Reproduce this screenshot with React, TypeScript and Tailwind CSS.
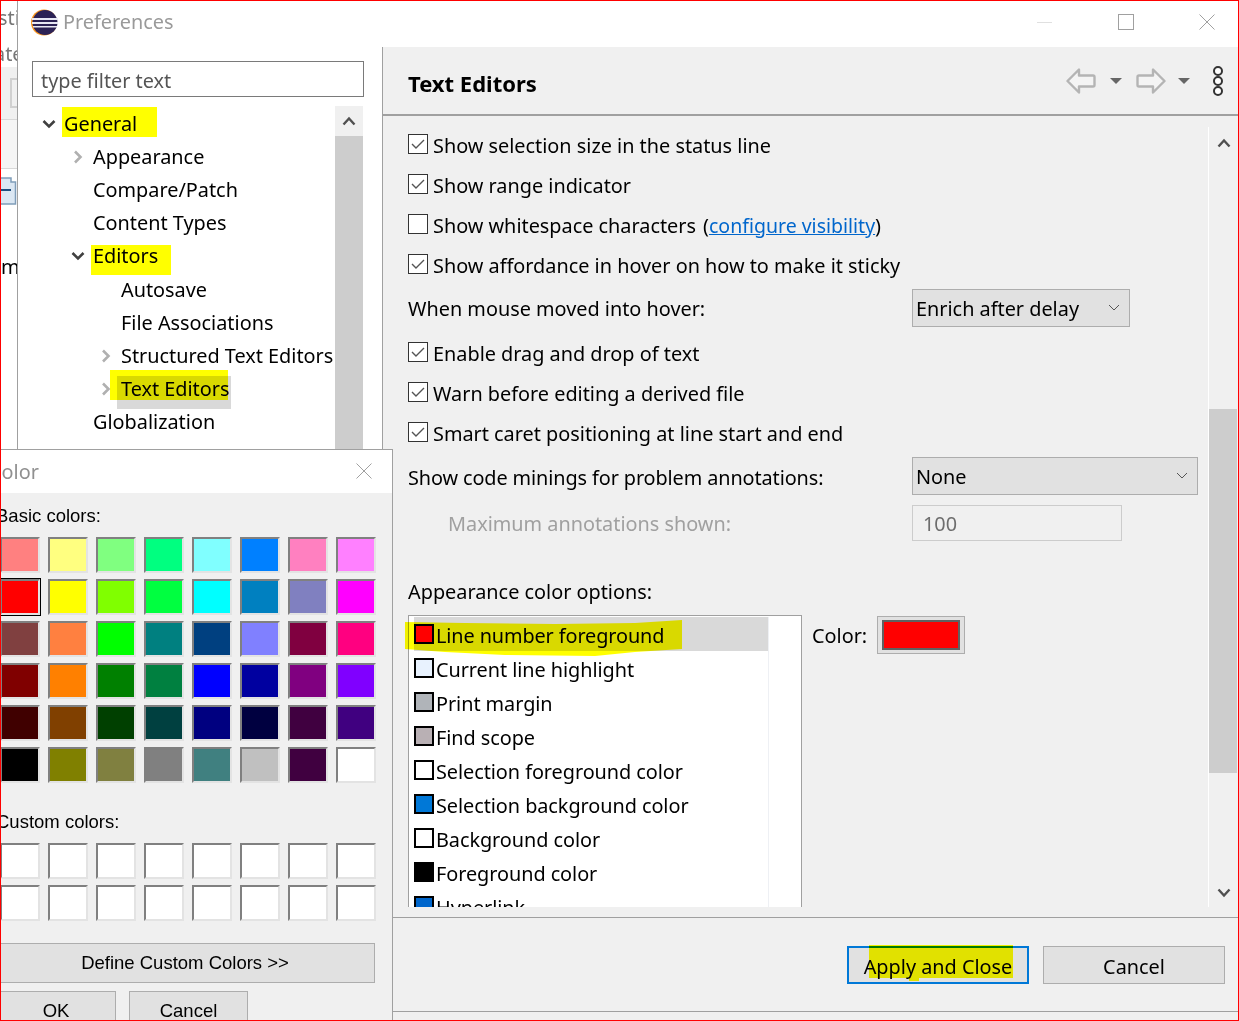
import type { ReactNode } from 'react';

const basicColors = [
  ['#ff8080', '#ffff80', '#80ff80', '#00ff80', '#80ffff', '#0080ff', '#ff80c0', '#ff80ff'],
  ['#ff0000', '#ffff00', '#80ff00', '#00ff40', '#00ffff', '#0080c0', '#8080c0', '#ff00ff'],
  ['#804040', '#ff8040', '#00ff00', '#008080', '#004080', '#8080ff', '#800040', '#ff0080'],
  ['#800000', '#ff8000', '#008000', '#008040', '#0000ff', '#0000a0', '#800080', '#8000ff'],
  ['#400000', '#804000', '#004000', '#004040', '#000080', '#000040', '#400040', '#400080'],
  ['#000000', '#808000', '#808040', '#808080', '#408080', '#c0c0c0', '#400040', '#ffffff'],
];

const colorOptions = [
  ['Line number foreground', '#ff0000'],
  ['Current line highlight', '#e8f2fe'],
  ['Print margin', '#b0b4b9'],
  ['Find scope', '#b9b0b4'],
  ['Selection foreground color', '#ffffff'],
  ['Selection background color', '#0078d7'],
  ['Background color', '#ffffff'],
  ['Foreground color', '#000000'],
  ['Hyperlink', '#0066cc'],
];

function Chevron({ open, dark }: { open?: boolean; dark?: boolean }) {
  return (
    <svg width="14" height="14" viewBox="0 0 14 14" fill="none" stroke={dark ? '#404040' : '#b0b0b0'} strokeWidth="2.6">
      {open ? <path d="M1.5 4 7 9.5 12.5 4" /> : <path d="M4 1.5 9.5 7 4 12.5" />}
    </svg>
  );
}

function TreeRow({ label, indent, arrow, children }: { label: string; indent: string; arrow?: 'open' | 'closed'; children?: ReactNode }) {
  return (
    <div className={`relative flex h-[33.2px] items-center text-[19.85px] text-black ${indent}`}>
      <span className="flex w-[22px] shrink-0 justify-start">
        {arrow === 'open' && <Chevron open dark />}
        {arrow === 'closed' && <Chevron />}
      </span>
      <span className="relative z-10 whitespace-nowrap">{label}</span>
      {children}
    </div>
  );
}

function Check({ label, checked, children }: { label?: string; checked?: boolean; children?: ReactNode }) {
  return (
    <div className="flex h-[40px] items-center gap-[5px] text-[19.85px] whitespace-nowrap text-black">
      <span className="mt-[-2px] flex h-[20px] w-[20px] shrink-0 items-center justify-center border border-[#333333] bg-white">
        {checked && (
          <svg width="16" height="16" viewBox="0 0 16 16" fill="none" stroke="#555555" strokeWidth="1.4">
            <path d="M2 8 6 12 14 4" />
          </svg>
        )}
      </span>
      <span className="pt-px">
        {label}
        {children}
      </span>
    </div>
  );
}

function Select({ label, width }: { label: string; width: string }) {
  return (
    <div className={`flex h-[38px] items-center justify-between border border-[#adadad] bg-[#e1e1e1] pr-[9px] pl-[3px] text-[19.85px] text-black ${width}`}>
      <span className="pt-[2px]">{label}</span>
      <svg width="12" height="8" viewBox="0 0 12 8" fill="none" stroke="#555555" strokeWidth="1">
        <path d="M1 1 6 6 11 1" />
      </svg>
    </div>
  );
}

function ArrowIcon({ flip }: { flip?: boolean }) {
  return (
    <svg width="30" height="26" viewBox="0 0 30 26" fill="#f4f4f4" stroke="#b4b4b4" strokeWidth="2.4" className={flip ? '-scale-x-100' : ''}>
      <path d="M1.5 13 13 1.5V7.5H27a1.5 1.5 0 0 1 1.5 1.5v8a1.5 1.5 0 0 1-1.5 1.5H13v6z" strokeLinejoin="round" />
    </svg>
  );
}

function Caret() {
  return <span className="h-0 w-0 border-x-[6px] border-t-[6px] border-x-transparent border-t-[#666666]" />;
}

function Swatch({ color, selected }: { color: string; selected?: boolean }) {
  return (
    <div className={`h-[36px] w-[40px] border-2 border-t-[#808080] border-r-[#e3e3e3] border-b-[#e3e3e3] border-l-[#808080] ${selected ? 'outline outline-1 outline-black' : ''}`} style={{ backgroundColor: color }} />
  );
}

function SwatchGrid({ rows, focusRow }: { rows: string[][]; focusRow?: number }) {
  return (
    <div className="flex flex-col gap-[6px]">
      {rows.map((row, r) => (
        <div key={r} className="flex gap-[8px]">
          {row.map((c, i) => (
            <Swatch key={i} color={c} selected={r === focusRow && i === 0} />
          ))}
        </div>
      ))}
    </div>
  );
}

function Mark({ className }: { className: string }) {
  return <span className={`absolute z-20 bg-[#ffff00] mix-blend-multiply ${className}`} />;
}

export default function App() {
  const customRows = [Array(8).fill('#ffffff'), Array(8).fill('#ffffff')];
  const [first, ...restOptions] = colorOptions;

  return (
    <div className="relative flex h-[1021px] w-[1239px] overflow-hidden border border-[#ff0000] bg-white font-['Noto_Sans','Open_Sans',sans-serif]">
      {/* window behind the dialog */}
      <div className="flex w-[16px] shrink-0 flex-col overflow-hidden bg-white text-[19.85px] text-[#777777]">
        <div className="h-[38px] pt-[2px] pl-0 whitespace-nowrap">
          <span className="ml-[-3px]">sti</span>
        </div>
        <div className="h-[28px] whitespace-nowrap">
          <span className="ml-[-7px]">ate</span>
        </div>
        <div className="flex h-[53px] shrink-0 items-center justify-end border-b border-[#d8d8d8] bg-[#f0f0f0]">
          <span className="h-[30px] w-[7px] border-y-2 border-l-2 border-[#d0d0d0]" />
        </div>
        <div className="h-[49px] shrink-0 border-b border-[#d8d8d8] bg-[#f5f5f5]" />
        <svg width="16" height="28" viewBox="0 0 16 28" fill="#dbe7f3" stroke="#7f9db9" strokeWidth="1.5" className="mt-[8px] shrink-0">
          <path d="M-2 1H10V5H14.5V27H-2z" />
          <path d="M-2 13H10" stroke="#1f4f7f" strokeWidth="2" />
        </svg>
        <div className="mt-[47px] text-black">m</div>
      </div>

      {/* Preferences window */}
      <div className="flex min-w-0 flex-1 flex-col border-l border-[#a0a0a0]">
        <div className="flex h-[46px] shrink-0 items-center pb-[4px] pl-[13px]">
          <svg width="27" height="27" viewBox="0 0 27 27" className="shrink-0">
            <circle cx="13" cy="13.5" r="13" fill="#f7941e" />
            <circle cx="14" cy="13.5" r="12.5" fill="#2c2255" />
            <rect x="1" y="9" width="26" height="2" fill="#e8e8f4" />
            <rect x="1" y="13" width="26" height="2" fill="#e8e8f4" />
            <rect x="2" y="17" width="24" height="1.5" fill="#e8e8f4" />
          </svg>
          <span className="ml-[5px] text-[19.85px] text-[#9a9a9a]">Preferences</span>
          <div className="ml-auto flex items-center">
            <span className="mr-[66px] h-px w-[15px] bg-[#e0e0e0]" />
            <span className="mr-[65px] h-[16px] w-[16px] border border-[#a0a0a0]" />
            <svg width="16" height="16" viewBox="0 0 16 16" stroke="#a0a0a0" strokeWidth="1" className="mr-[23px]">
              <path d="M.5.5 15.5 15.5M15.5.5.5 15.5" />
            </svg>
          </div>
        </div>

        <div className="flex min-h-0 flex-1">
          {/* tree pane */}
          <div className="flex w-[365px] shrink-0 flex-col border-r border-[#a0a0a0] pt-[14px] pl-[14px]">
            <div className="flex h-[36px] w-[332px] items-center border border-[#7a7a7a] pt-[4px] pl-[8px] text-[19.85px] text-[#555555]">type filter text</div>
            <div className="mt-[9px] flex min-h-0 flex-1">
              <div className="w-[303px] shrink-0 pt-[1px]">
                <TreeRow label="General" indent="pl-[10px]" arrow="open">
                  <Mark className="top-0 left-[30px] h-[30px] w-[95px]" />
                </TreeRow>
                <TreeRow label="Appearance" indent="pl-[39px]" arrow="closed" />
                <TreeRow label="Compare/Patch" indent="pl-[39px]" />
                <TreeRow label="Content Types" indent="pl-[39px]" />
                <TreeRow label="Editors" indent="pl-[39px]" arrow="open">
                  <Mark className="top-[5px] left-[59px] h-[30px] w-[80px]" />
                </TreeRow>
                <TreeRow label="Autosave" indent="pl-[67px]" />
                <TreeRow label="File Associations" indent="pl-[67px]" />
                <TreeRow label="Structured Text Editors" indent="pl-[67px]" arrow="closed" />
                <TreeRow label="Text Editors" indent="pl-[67px]" arrow="closed">
                  <span className="absolute top-[3px] left-[85px] h-[33px] w-[114px] bg-[#d9d9d9]" />
                  <Mark className="top-[-3px] left-[78px] h-[30px] w-[118px]" />
                </TreeRow>
                <TreeRow label="Globalization" indent="pl-[39px]" />
                <TreeRow label="Keys" indent="pl-[39px]" />
              </div>
              <div className="flex w-[28px] shrink-0 flex-col">
                <div className="flex h-[30px] items-center justify-center bg-[#f0f0f0]">
                  <svg width="14" height="10" viewBox="0 0 14 10" fill="none" stroke="#505050" strokeWidth="2.4">
                    <path d="M1.5 8.5 7 2.5 12.5 8.5" />
                  </svg>
                </div>
                <div className="flex-1 bg-[#cdcdcd]" />
              </div>
            </div>
          </div>

          {/* Text Editors page */}
          <div className="flex min-w-0 flex-1 flex-col bg-[#f0f0f0]">
            <div className="flex h-[69px] shrink-0 items-center border-b-2 border-b-[#a0a0a0] pl-[25px]">
              <span className="pt-[5px] text-[22px] font-bold text-black">Text Editors</span>
              <div className="ml-auto flex items-center">
                <ArrowIcon />
                <span className="mr-[14px] ml-[14px] flex"><Caret /></span>
                <ArrowIcon flip />
                <span className="mr-[23px] ml-[12px] flex"><Caret /></span>
                <span className="mr-[15px] flex flex-col">
                  <span className="h-[10px] w-[10px] rounded-full border-2 border-[#333333] bg-white" />
                  <span className="h-[10px] w-[10px] rounded-full border-2 border-[#333333] bg-white" />
                  <span className="h-[10px] w-[10px] rounded-full border-2 border-[#333333] bg-white" />
                </span>
              </div>
            </div>

            <div className="flex min-h-0 flex-1">
              <div className="mb-[10px] min-w-0 flex-1 overflow-hidden pt-[9px] pl-[25px]">
                <Check label="Show selection size in the status line" checked />
                <Check label="Show range indicator" checked />
                <Check>
                  Show whitespace characters
                  <span className="ml-[7px]">(</span>
                  <span className="text-[19.5px] text-[#0066cc] underline">configure visibility</span>)
                </Check>
                <Check label="Show affordance in hover on how to make it sticky" checked />
                <div className="mt-[4px] flex h-[38px] items-center justify-between pr-[78px] text-[19.85px] text-black">
                  <span className="pt-[2px]">When mouse moved into hover:</span>
                  <Select label="Enrich after delay" width="w-[218px]" />
                </div>
                <div className="mt-[6px]">
                  <Check label="Enable drag and drop of text" checked />
                  <Check label="Warn before editing a derived file" checked />
                  <Check label="Smart caret positioning at line start and end" checked />
                </div>
                <div className="mt-[4px] flex h-[38px] items-center justify-between pr-[10px] text-[19.85px] text-black">
                  <span className="pt-[4px] tracking-[-0.1px]">Show code minings for problem annotations:</span>
                  <Select label="None" width="w-[286px]" />
                </div>
                <div className="mt-[10px] flex h-[36px] items-center justify-between pr-[86px] pl-[40px] text-[19.85px] text-[#a0a0a0]">
                  <span className="pt-[2px]">Maximum annotations shown:</span>
                  <div className="flex h-[36px] w-[210px] items-center border border-[#cccccc] pt-[2px] pl-[10px] text-[#6d6d6d]">100</div>
                </div>
                <div className="mt-[33px] text-[19.85px] leading-[36px] text-black">Appearance color options:</div>
                <div className="mt-[5px] flex">
                  <div className="h-[400px] w-[394px] shrink-0 border border-[#a0a0a0] bg-white pt-px pl-[5px]">
                    <div className="relative h-full w-[355px] border-r border-[#eef0f4]">
                      <div className="flex h-[34px] items-center gap-[2px] bg-[#d9d9d9] pt-[4px] text-[19.85px] tracking-[-0.1px] text-black">
                        <span className="mt-[-4px] h-[20px] w-[20px] shrink-0 border-2 border-black" style={{ backgroundColor: first[1] }} />
                        {first[0]}
                      </div>
                      <svg width="280" height="38" viewBox="0 0 280 38" className="absolute top-[2px] left-[-9px] z-20 mix-blend-multiply">
                        <path d="M0 3 L60 4 L150 5 L230 4 L277 1 L277 30 L230 33 L190 37 L100 36 L40 33 L0 30z" fill="#ffff00" />
                      </svg>
                      {restOptions.map(([name, color]) => (
                        <div key={name} className="flex h-[34px] items-center gap-[2px] pt-[4px] text-[19.85px] tracking-[-0.05px] text-black">
                          <span className="mt-[-4px] h-[20px] w-[20px] shrink-0 border-2 border-black" style={{ backgroundColor: color }} />
                          {name}
                        </div>
                      ))}
                    </div>
                  </div>
                  <div className="mt-px ml-[10px] flex h-[38px] items-center text-[19.85px] text-black">
                    <span className="pt-[2px]">Color:</span>
                    <div className="ml-[10px] flex h-[38px] w-[88px] items-center justify-center border border-[#adadad] bg-[#e1e1e1]">
                      <span className="h-[30px] w-[78px] border-2 border-[#606060] bg-[#ff0000]" />
                    </div>
                  </div>
                </div>
              </div>
              <div className="mt-[11px] mb-[10px] flex w-[30px] shrink-0 flex-col border-l border-white">
                <div className="flex h-[31px] items-center justify-center">
                  <svg width="14" height="10" viewBox="0 0 14 10" fill="none" stroke="#505050" strokeWidth="2.4">
                    <path d="M1.5 8.5 7 2.5 12.5 8.5" />
                  </svg>
                </div>
                <div className="mt-[251px] h-[364px] w-[28px] bg-[#cdcdcd]" />
                <div className="mt-auto flex h-[28px] items-center justify-center">
                  <svg width="14" height="10" viewBox="0 0 14 10" fill="none" stroke="#505050" strokeWidth="2.4">
                    <path d="M1.5 1.5 7 7.5 12.5 1.5" />
                  </svg>
                </div>
              </div>
            </div>

            <div className="flex h-[95px] shrink-0 items-start justify-end gap-[14px] border-y border-[#a0a0a0] pt-[28px] pr-[13px] text-[19.85px] text-black">
              <div className="relative flex h-[38px] w-[182px] items-center justify-center border-2 border-[#0078d7] bg-[#e1e1e1] pt-[4px]">
                Apply and Close
                <Mark className="top-[-3px] left-[20px] h-[33px] w-[144px]" />
                <Mark className="top-[20px] left-[60px] h-[13px] w-[10px]" />
              </div>
              <div className="flex h-[38px] w-[182px] items-center justify-center border border-[#adadad] bg-[#e1e1e1] pt-[4px]">Cancel</div>
            </div>
            <div className="h-[8px] shrink-0" />
          </div>
        </div>
      </div>

      {/* Color dialog over the Preferences window */}
      <div className="absolute top-[448px] left-[-1px] z-30 flex h-[580px] w-[393px] flex-col border border-[#a0a0a0] bg-[#f0f0f0] font-['Liberation_Sans',sans-serif]">
        <div className="flex h-[43px] shrink-0 items-center justify-between bg-white pr-[20px] pl-[2px] font-['Noto_Sans',sans-serif] text-[19.85px] text-[#909090]">
          <span className="ml-[-14px]">Color</span>
          <svg width="16" height="16" viewBox="0 0 16 16" stroke="#a0a0a0" strokeWidth="1" className="mb-[2px]">
            <path d="M.5.5 15.5 15.5M15.5.5.5 15.5" />
          </svg>
        </div>
        <div className="flex flex-1 flex-col">
          <div className="mt-[11px] ml-[-5px] text-[18.5px] leading-[24px] text-black">Basic colors:</div>
          <div className="mt-[9px] ml-[-1px]">
            <SwatchGrid rows={basicColors} focusRow={1} />
          </div>
          <div className="mt-[27px] ml-[-5px] text-[18.5px] leading-[24px] text-black">Custom colors:</div>
          <div className="mt-[9px] ml-[-1px]">
            <SwatchGrid rows={customRows} />
          </div>
          <div className="mt-[22px] ml-[-12px] flex h-[40px] w-[386px] items-center justify-center border border-[#adadad] bg-[#e1e1e1] pl-[6px] text-[18.5px] text-black">
            Define Custom Colors &gt;&gt;
          </div>
          <div className="mt-[8px] ml-[-5px] flex text-[18.5px] text-black">
            <div className="flex h-[40px] w-[120px] items-center justify-center border border-[#adadad] bg-[#e1e1e1]">OK</div>
            <div className="ml-[13px] flex h-[40px] w-[119px] items-center justify-center border border-[#adadad] bg-[#e1e1e1]">Cancel</div>
          </div>
        </div>
      </div>
    </div>
  );
}
